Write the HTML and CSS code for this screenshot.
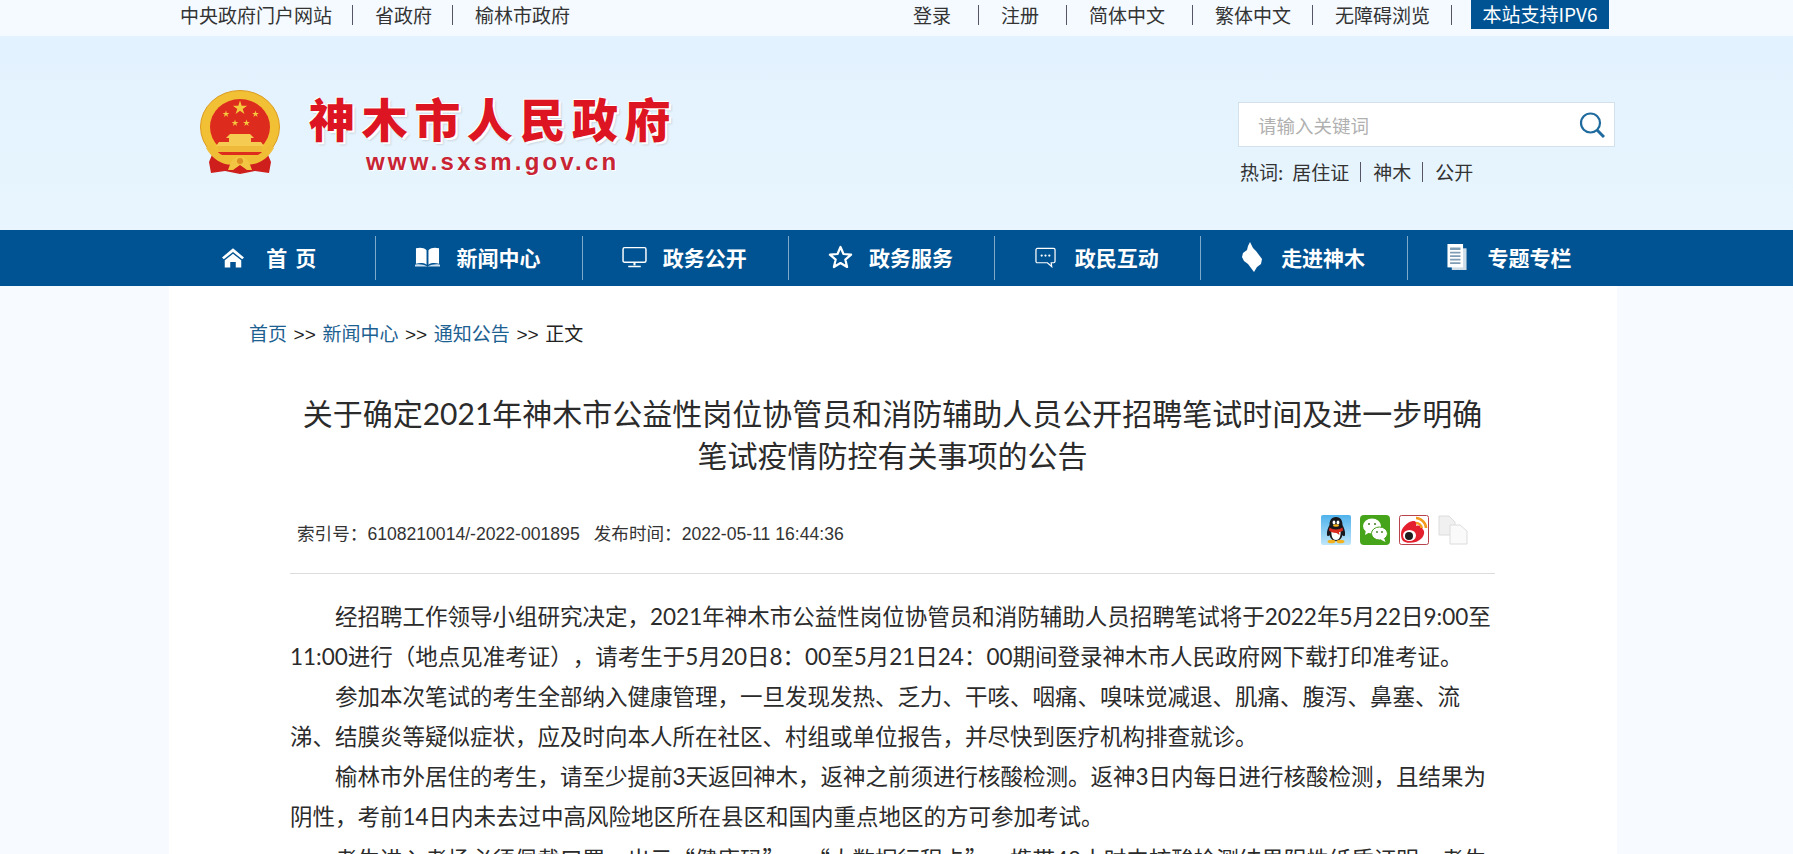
FILE: index.html
```html
<!DOCTYPE html>
<html lang="zh-CN">

<head>
    <meta charset="UTF-8">
    <meta name="viewport" content="width=device-width, initial-scale=1.0">
    <title>关于确定2021年神木市公益性岗位协管员和消防辅助人员公开招聘笔试时间及进一步明确笔试疫情防控有关事项的公告</title>
    <link rel="stylesheet" href="styles.css">
</head>

<body>
    <div class="topbar">
        <div class="top-left">
            <a href="#">中央政府门户网站</a><i class="sep"></i>
            <a href="#">省政府</a><i class="sep"></i>
            <a href="#">榆林市政府</a>
        </div>
        <div class="top-right">
            <a href="#" class="wide">登录</a><i class="sep"></i>
            <a href="#" class="wide">注册</a><i class="sep"></i>
            <a href="#" class="wide">简体中文</a><i class="sep"></i>
            <a href="#">繁体中文</a><i class="sep"></i>
            <a href="#">无障碍浏览</a><i class="sep"></i>
            <a href="#" class="ipv6">本站支持IPV6</a>
        </div>
    </div>

    <header class="header">
        <div class="logo">
            <svg class="emblem" viewBox="0 0 80 84">
                <defs>
                    <path id="star" d="M0 -1 L.225 -.31 .95 -.31 .36 .12 .59 .81 0 .38 -.59 .81 -.36 .12 -.95 -.31 -.225 -.31 Z" />
                </defs>
                <path d="M14 60 L9 72 L11 83 L25 81 L40 84 L55 81 L69 83 L71 72 L66 60 Z" fill="#cf1f1c" />
                <ellipse cx="40" cy="37" rx="39.5" ry="36.5" fill="#f2c035" stroke="#dc9a1e" stroke-width="1" />
                <ellipse cx="40" cy="37" rx="30" ry="28" fill="#dd2c1e" />
                <use href="#star" transform="translate(40 18) scale(7.5)" fill="#f5c93e" />
                <use href="#star" transform="translate(26 24) scale(3.6)" fill="#f5c93e" />
                <use href="#star" transform="translate(55.5 24) scale(3.6)" fill="#f5c93e" />
                <use href="#star" transform="translate(35 33) scale(3.6)" fill="#f5c93e" />
                <use href="#star" transform="translate(46.5 33) scale(3.6)" fill="#f5c93e" />
                <path d="M30 44 H50 L54 48 H51 V52 H61 L64 56 H16 L19 52 H29 V48 H26 Z" fill="#f5cb52" />
                <rect x="18" y="56" width="44" height="6" fill="#efb93a" />
                <rect x="18" y="62" width="44" height="3" fill="#dd2c1e" />
                <path d="M11 54 C18 66 30 70 40 66 C50 70 62 66 69 54 L74 58 C66 72 52 78 40 73 C28 78 14 72 6 58 Z" fill="#f0bd36" />
                <path d="M31 72 C35 65 45 65 49 72 L52 80 H47 L40 75 L33 80 H28 Z" fill="#f2c643" />
                <circle cx="40" cy="71" r="3" fill="#dc8f22" />
            </svg>
            <div class="logo-text">
                <div class="logo-name">神木市人民政府</div>
                <div class="logo-url">www.sxsm.gov.cn</div>
            </div>
        </div>
        <div class="search-col">
            <div class="search">
                <span class="placeholder">请输入关键词</span>
                <svg class="search-icon" viewBox="0 0 26 26">
                    <circle cx="11.5" cy="11" r="9.5" fill="none" stroke="#1f6a9e" stroke-width="2.2" />
                    <path d="M18 18 L25 25" stroke="#1f6a9e" stroke-width="3" fill="none" />
                </svg>
            </div>
            <div class="hot">
                <span>热词:</span><a href="#" class="hot-first">居住证</a><i class="sep"></i><a href="#">神木</a><i class="sep"></i><a href="#">公开</a>
            </div>
        </div>
    </header>

    <nav class="nav">
        <a href="#" class="nav-item nav-item-home">
            <svg class="nav-icon nav-icon-home" viewBox="0 0 24 22">
                <path d="M12 1 L24 11 L22 13 L12 5 L2 13 L0 11 Z" fill="#fff" />
                <path d="M12 7 L21 14 V22 H15 V16 H9 V22 H3 V14 Z" fill="#fff" />
            </svg>
            <span class="nav-home">首页</span>
        </a>
        <a href="#" class="nav-item">
            <svg class="nav-icon" viewBox="0 0 26 22">
                <path d="M12 4 C9 1 5 1 1 2 V18 C5 17 9 17 12 19 Z" fill="#fff" />
                <path d="M14 4 C17 1 21 1 25 2 V18 C21 17 17 17 14 19 Z" fill="#fff" />
                <path d="M0 19 C5 18 9 19 13 21 C17 19 21 18 26 19 V21 H0 Z" fill="#cfe0ee" />
            </svg>
            <span>新闻中心</span>
        </a>
        <a href="#" class="nav-item">
            <svg class="nav-icon" viewBox="0 0 24 22">
                <rect x="1" y="2" width="22" height="14" rx="1.5" fill="none" stroke="#fff" stroke-width="1.4" />
                <path d="M11 16 h2 v3 h-2 z M6 19.5 h12 v1.3 h-12 z" fill="#fff" />
            </svg>
            <span>政务公开</span>
        </a>
        <a href="#" class="nav-item">
            <svg class="nav-icon" viewBox="0 0 24 24">
                <path d="M12 2 L15 9 L22.6 9.6 L16.8 14.6 L18.6 22 L12 18 L5.4 22 L7.2 14.6 L1.4 9.6 L9 9 Z" fill="none" stroke="#fff" stroke-width="2.2" stroke-linejoin="round" />
            </svg>
            <span>政务服务</span>
        </a>
        <a href="#" class="nav-item">
            <svg class="nav-icon nav-icon-chat" viewBox="0 0 22 22">
                <path d="M2.5 1.5 H19.5 A1.5 1.5 0 0 1 21 3 V15 A1.5 1.5 0 0 1 19.5 16.5 H17 L17.5 20.5 L13 16.5 H2.5 A1.5 1.5 0 0 1 1 15 V3 A1.5 1.5 0 0 1 2.5 1.5 Z" fill="none" stroke="#fff" stroke-width="1.3" />
                <circle cx="7" cy="9" r="1.2" fill="#fff" />
                <circle cx="11" cy="9" r="1.2" fill="#fff" />
                <circle cx="15" cy="9" r="1.2" fill="#fff" />
            </svg>
            <span>政民互动</span>
        </a>
        <a href="#" class="nav-item">
            <svg class="nav-icon nav-icon-map" viewBox="0 0 22 30">
                <path d="M9 0 L12 6 L15 9 L18 13 L21 17 L20 22 L16 25 L13 30 L10 26 L7 22 L3 19 L1 15 L2 11 L6 8 L7 4 Z" fill="#fff" />
            </svg>
            <span>走进神木</span>
        </a>
        <a href="#" class="nav-item">
            <svg class="nav-icon nav-icon-doc" viewBox="0 0 22 30">
                <rect x="5" y="5" width="17" height="25" fill="#cfdde9" />
                <rect x="0" y="0" width="18" height="27" fill="#fff" />
                <path d="M3 4 h12 v3 h-12 z M3 9 h12 v2 h-12 z M3 13 h12 v2 h-12 z M3 17 h12 v2 h-12 z M3 21 h12 v2 h-12 z" fill="#7f9cb5" />
            </svg>
            <span>专题专栏</span>
        </a>
    </nav>

    <main class="panel">
        <div class="crumbs">
            <a href="#">首页</a><span class="gt">&gt;&gt;</span><a href="#">新闻中心</a><span class="gt">&gt;&gt;</span><a href="#">通知公告</a><span class="gt">&gt;&gt;</span>正文
        </div>

        <div class="article">
            <h1 class="title">关于确定2021年神木市公益性岗位协管员和消防辅助人员公开招聘笔试时间及进一步明确笔试疫情防控有关事项的公告</h1>

            <div class="meta">
                <div class="meta-text">
                    <span>索引号：6108210014/-2022-001895</span>
                    <span>发布时间：2022-05-11 16:44:36</span>
                </div>
                <div class="share">
                    <svg viewBox="0 0 30 30">
                        <defs>
                            <linearGradient id="qq-bg" x1="0" y1="0" x2="0" y2="1">
                                <stop offset="0" stop-color="#4fb2ec" />
                                <stop offset="1" stop-color="#bfe6fa" />
                            </linearGradient>
                        </defs>
                        <rect width="30" height="30" rx="2" fill="url(#qq-bg)" />
                        <path d="M15 2 C10 2 8.5 6 8.5 10 C7 13 5.5 16 6 20 C6.5 22 8 21 8.5 20 C9.5 24 12 26 15 26 C18 26 20.5 24 21.5 20 C22 21 23.5 22 24 20 C24.5 16 23 13 21.5 10 C21.5 6 20 2 15 2 Z" fill="#17171c" />
                        <path d="M10.5 15 C10 20 11 25 15 25 C19 25 20 20 19.5 15 Z" fill="#fff" />
                        <ellipse cx="13" cy="7.5" rx="1.4" ry="2" fill="#fff" />
                        <ellipse cx="17" cy="7.5" rx="1.4" ry="2" fill="#fff" />
                        <ellipse cx="15" cy="10.5" rx="3" ry="1.2" fill="#f3b21d" />
                        <path d="M8.5 12.5 C12 15 18 15 21.5 12.5 L22 15.5 C20 16.5 19 17 18 17 L18.5 20 L15.5 18 C12 18 9.5 17 8 15.5 Z" fill="#d92b1e" />
                        <ellipse cx="10.5" cy="26.5" rx="4" ry="1.8" fill="#f3b21d" />
                        <ellipse cx="19.5" cy="26.5" rx="4" ry="1.8" fill="#f3b21d" />
                    </svg>
                    <svg viewBox="0 0 30 30">
                        <rect width="30" height="30" rx="4" fill="#46a41a" />
                        <ellipse cx="12" cy="11" rx="9" ry="7.5" fill="#fff" />
                        <path d="M6 15 L5 20 L10 17 Z" fill="#fff" />
                        <ellipse cx="19.5" cy="18.5" rx="8" ry="6.5" fill="#fff" stroke="#46a41a" stroke-width="1" />
                        <path d="M24 23 L25.5 27 L20.5 24.5 Z" fill="#fff" />
                        <circle cx="9" cy="9" r="1" fill="#3e7a22" />
                        <circle cx="15" cy="9" r="1" fill="#3e7a22" />
                        <circle cx="17" cy="17" r=".9" fill="#3e7a22" />
                        <circle cx="22" cy="17" r=".9" fill="#3e7a22" />
                    </svg>
                    <svg viewBox="0 0 30 30">
                        <rect x=".5" y=".5" width="29" height="29" rx="2" fill="#fff" stroke="#b8434a" />
                        <path d="M2 19 C2 13 8 7 14 6 C17 5.5 18 8 17 11 C20 10 24 10.5 23.5 14 C26 16 25.5 20 23 23 C19 27.5 11 29 6 27 C3 26 2 23 2 19 Z" fill="#e5202e" />
                        <ellipse cx="10.5" cy="20.5" rx="6.5" ry="5.5" fill="#fff" />
                        <circle cx="10" cy="21" r="4" fill="#1c1c1c" />
                        <path d="M17 3 C22 3 27 8 27 13" fill="none" stroke="#f39a1d" stroke-width="2.6" />
                        <path d="M17 8 C20 8 22.5 10 22.5 13" fill="none" stroke="#f39a1d" stroke-width="2.4" />
                    </svg>
                    <svg viewBox="0 0 30 30">
                        <path d="M1 1 H11 L17 7 V20 H1 Z" fill="#f0f0f0" stroke="#dcdcdc" />
                        <path d="M12 10 H22 L29 16 V29 H12 Z" fill="#fafafa" stroke="#dcdcdc" />
                    </svg>
                </div>
            </div>

            <div class="content">
                <p>经招聘工作领导小组研究决定，2021年神木市公益性岗位协管员和消防辅助人员招聘笔试将于2022年5月22日9:00至11:00进行（地点见准考证），请考生于5月20日8：00至5月21日24：00期间登录神木市人民政府网下载打印准考证。</p>
                <p>参加本次笔试的考生全部纳入健康管理，一旦发现发热、乏力、干咳、咽痛、嗅味觉减退、肌痛、腹泻、鼻塞、流涕、结膜炎等疑似症状，应及时向本人所在社区、村组或单位报告，并尽快到医疗机构排查就诊。</p>
                <p>榆林市外居住的考生，请至少提前3天返回神木，返神之前须进行核酸检测。返神3日内每日进行核酸检测，且结果为阴性，考前14日内未去过中高风险地区所在县区和国内重点地区的方可参加考试。</p>
                <p>考生进入考场必须佩戴口罩，出示<span class="quoted">“健康码”、“大数据行程卡”</span>，携带48小时内核酸检测结果阴性纸质证明，考生</p>
            </div>
        </div>
    </main>
</body>

</html>
```

FILE: styles.css
```css
html,
body {
    margin: 0;
    padding: 0;
    height: 100%;
    overflow: hidden;
}

body {
    background-color: #f7fbff;
    color: #333;
    font-family: "Noto Sans CJK SC", "Noto Sans", sans-serif;
    text-spacing-trim: space-all;
}

a {
    color: inherit;
    text-decoration: none;
}

.sep {
    display: inline-block;
    width: 1px;
    height: 20px;
    background-color: #556;
}

/* top strip */
.topbar {
    display: flex;
    justify-content: space-between;
    height: 36px;
    padding: 0 184px 0 180px;
    background-color: #f4faff;
    font-size: 19px;
    line-height: 30px;
}

.top-left,
.top-right {
    display: flex;
    align-items: flex-start;
}

.topbar .sep {
    margin-top: 5px;
}

.top-left a {
    margin-right: 20px;
}

.top-left .sep {
    margin-right: 22px;
}

.top-right a {
    margin-right: 21px;
}

.top-right .wide {
    margin-right: 27px;
}

.top-right .sep {
    margin-right: 22px;
}

.top-right .ipv6 {
    width: 138px;
    height: 29px;
    margin: 0 0 0 -3px;
    background-color: #005392;
    color: #fff;
    line-height: 27px;
    text-align: center;
}

/* logo and search */
.header {
    display: flex;
    justify-content: space-between;
    height: 194px;
    padding: 54px 178px 0 200px;
    box-sizing: border-box;
    background: linear-gradient(#e2f2fe, #e8f5fe);
}

.logo {
    display: flex;
    align-items: flex-start;
}

.emblem {
    width: 80px;
    height: 84px;
    margin-right: 29px;
}

.logo-name {
    width: 370px;
    color: #dd1522;
    font-size: 46px;
    font-weight: 900;
    letter-spacing: 6.6px;
    line-height: 54px;
    white-space: nowrap;
    text-shadow: 2px 2px 0 #fff, -1px -1px 0 #fff, 3px 3px 2px rgba(0, 0, 0, 0.12);
}

.logo-url {
    margin: 7px 0 0 57px;
    color: #c92433;
    font-family: "Liberation Sans", sans-serif;
    font-size: 24px;
    font-weight: 700;
    letter-spacing: 3.2px;
    line-height: 22px;
    text-shadow: 1px 1px 0 #fff;
}

.search-col {
    width: 377px;
    margin-top: 12px;
}

.search {
    display: flex;
    align-items: center;
    justify-content: space-between;
    height: 45px;
    padding: 0 9px 0 19px;
    box-sizing: border-box;
    border: 1px solid #d3e1ec;
    background-color: #fff;
}

.placeholder {
    color: #b0b0b0;
    font-size: 18.5px;
}

.search-icon {
    width: 26px;
    height: 26px;
}

.hot {
    display: flex;
    align-items: center;
    margin-top: 11px;
    padding-left: 2px;
    font-size: 19px;
    line-height: 28px;
}

.hot-first {
    margin-left: 9px;
}

.hot .sep {
    margin: 0 12px 0 11px;
}

/* main nav */
.nav {
    display: flex;
    height: 56px;
    padding-left: 170px;
    background-color: #005392;
}

.nav-item {
    position: relative;
    display: flex;
    align-items: center;
    justify-content: center;
    width: 206.3px;
    padding: 0 3px 2px 0;
    box-sizing: border-box;
    color: #fff;
    font-size: 21px;
    font-weight: 700;
}

.nav-item-home {
    padding: 0 0 2px 0;
}

.nav-item::after {
    content: "";
    position: absolute;
    right: 0;
    top: 6px;
    bottom: 6px;
    width: 1px;
    background-color: #7fa9c9;
}

.nav-item:last-child::after {
    display: none;
}

.nav-icon {
    width: 25px;
    height: 24px;
    margin-right: 16px;
}

.nav-icon-home {
    width: 22px;
    height: 21px;
    margin-right: 22px;
}

.nav-icon-chat {
    width: 21px;
    height: 21px;
    margin-right: 19px;
}

.nav-icon-map {
    width: 22px;
    height: 30px;
    margin-right: 18px;
}

.nav-icon-doc {
    width: 20px;
    height: 26px;
    margin-right: 20px;
}

.nav-home {
    letter-spacing: 8px;
}

/* article */
.panel {
    width: 1448px;
    margin-left: 169px;
    padding: 33px 0 0 80px;
    box-sizing: border-box;
    background-color: #fff;
}

.crumbs {
    color: #222;
    font-size: 19px;
    line-height: 28px;
}

.crumbs a {
    color: #1d6191;
}

.gt {
    margin: 0 6.6px;
    font-family: "Liberation Sans", sans-serif;
}

.article {
    width: 1205px;
    margin-left: 41px;
}

.title {
    margin: 43px 0 0;
    color: #2b2b2b;
    font-family: Lato, "Noto Sans CJK SC", sans-serif;
    font-size: 30px;
    font-weight: 400;
    line-height: 42px;
    text-align: center;
}

.meta {
    display: flex;
    align-items: flex-start;
    justify-content: space-between;
    margin-top: 39px;
    padding: 0 27px 26px 7px;
    border-bottom: 1px solid #ddd;
}

.meta-text {
    display: flex;
    gap: 14px;
    margin-top: 6px;
    font-family: "Liberation Sans", "Noto Sans CJK SC", sans-serif;
    font-size: 17.6px;
    line-height: 26px;
}

.share {
    display: flex;
    gap: 9px;
}

.share svg {
    display: block;
    width: 30px;
    height: 30px;
}

.content {
    padding-top: 23px;
    color: #2b2b2b;
    font-family: Lato, "Noto Sans CJK SC", sans-serif;
    font-size: 22.5px;
    line-height: 40.1px;
}

.content p {
    margin: 0;
    text-indent: 2em;
}

/* these quotes are full width in the original */
.quoted {
    font-family: "Noto Sans CJK SC", sans-serif;
}
```
